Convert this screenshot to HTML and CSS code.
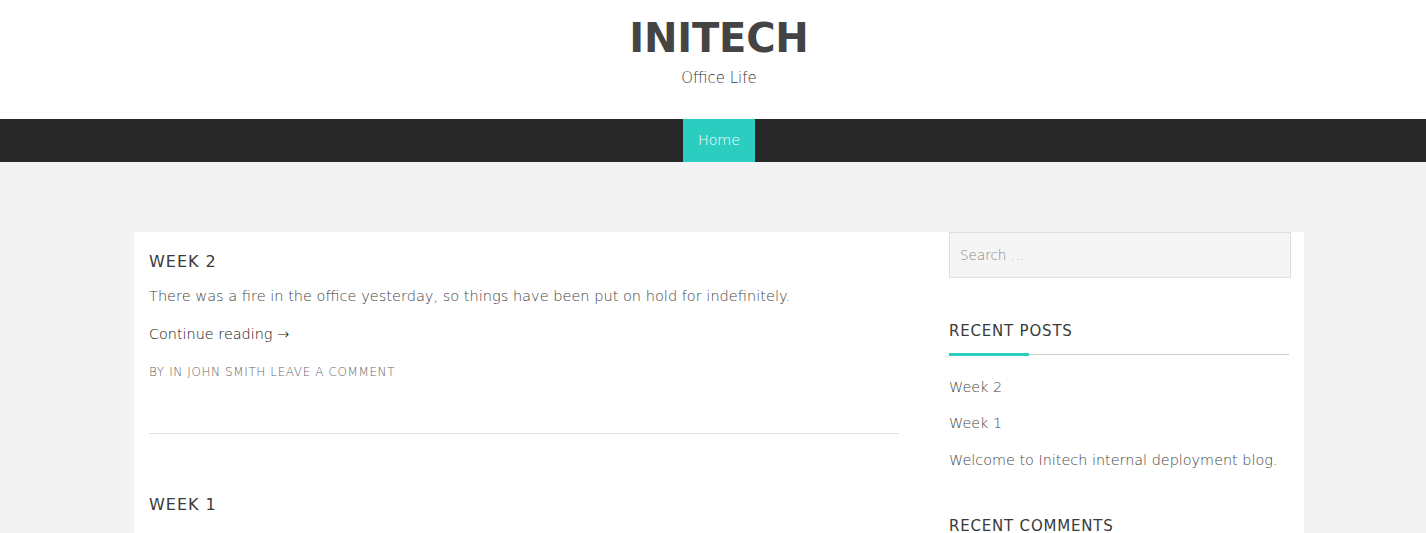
FILE: index.html
```html
<!DOCTYPE html>
<html>
<head>
<meta charset="utf-8">
<link rel="stylesheet" href="styles.css">
</head>
<body>
<div class="site">
<header class="site-header">
  <h1 class="site-title">INITECH</h1>
  <p class="site-desc">Office Life</p>
</header>
<nav class="main-nav">
  <a class="nav-item active" href="#">Home</a>
</nav>
<div class="page">
  <div class="container">
    <main class="content">
      <article class="post">
        <h2 class="post-title">Week 2</h2>
        <p class="post-excerpt">There was a fire in the office yesterday, so things have been put on hold for indefinitely.</p>
        <a class="more" href="#">Continue reading →</a>
        <div class="meta">By in John Smith Leave a comment</div>
      </article>
      <article class="post">
        <h2 class="post-title">Week 1</h2>
      </article>
    </main>
    <aside class="sidebar">
      <div class="search"><input class="search-field" type="text" placeholder="Search …"></div>
      <section class="widget">
        <h3 class="widget-title">Recent Posts</h3>
        <ul class="widget-list">
          <li><a href="#">Week 2</a></li>
          <li><a href="#">Week 1</a></li>
          <li><a href="#">Welcome to Initech internal deployment blog.</a></li>
        </ul>
      </section>
      <section class="widget">
        <h3 class="widget-title">Recent Comments</h3>
      </section>
    </aside>
  </div>
</div>
</div>
</body>
</html>
```
FILE: styles.css
```css
* { box-sizing: border-box; }
html, body { margin: 0; padding: 0; }
body {
  font-family: "DejaVu Sans", sans-serif;
  background: #f3f3f3;
  color: #666;
  overflow: hidden;
}
a { text-decoration: none; color: inherit; }
.site { width: 1438px; }

.site-header {
  background: #fff;
  height: 119px;
  text-align: center;
  padding-top: 14px;
}
.site-title {
  margin: 0;
  font-size: 40px;
  line-height: 48px;
  font-weight: bold;
  color: #444;
  letter-spacing: -0.2px;
}
.site-desc {
  margin: 5px 0 0;
  font-size: 15px;
  line-height: 22px;
  font-weight: 300;
  color: #333;
}

.main-nav {
  background: #282828;
  height: 43px;
  display: flex;
  justify-content: center;
}
.nav-item {
  background: #2bcdc1;
  color: #fff;
  font-size: 14.3px;
  font-weight: 300;
  padding: 0 15px;
  line-height: 43px;
}

.page {
  padding-top: 70px;
}
.container {
  width: 1170px;
  margin: 0 auto;
  background: #fff;
  display: flex;
  min-height: 400px;
}
.content {
  width: 780px;
  padding: 0 15px;
}
.post {
  padding-top: 20px;
}
.post + .post {
  padding-top: 61px;
}
.post:first-child {
  border-bottom: 1px solid #e0e0e0;
  padding-bottom: 53px;
}
.post-title {
  margin: 0;
  font-size: 16px;
  line-height: 20px;
  font-weight: normal;
  text-transform: uppercase;
  letter-spacing: 1px;
  color: #3a3a3a;
}
.post-excerpt {
  margin: 14px 0 0;
  font-size: 14.55px;
  line-height: 20px;
  font-weight: 300;
  color: #444;
}
.more {
  display: block;
  margin-top: 18px;
  font-size: 14.4px;
  line-height: 20px;
  font-weight: 300;
  color: #111;
}
.meta {
  margin-top: 20px;
  font-size: 12px;
  line-height: 16px;
  font-weight: 300;
  text-transform: uppercase;
  letter-spacing: 0.6px;
  color: #666;
}

.sidebar {
  width: 390px;
  padding: 0 15px 0 35px;
}
.search-field {
  width: 342px;
  height: 46px;
  background: #f5f5f5;
  border: 1px solid #ddd;
  padding: 0 10px;
  font-family: "DejaVu Sans", sans-serif;
  font-size: 13.5px;
  font-weight: 300;
  color: #666;
  outline: none;
  display: block;
}
.search-field::placeholder { color: #888; }
.widget {
  margin-top: 43px;
}
.widget + .widget { margin-top: 46px; }
.widget-title {
  margin: 0;
  font-size: 15px;
  line-height: 20px;
  font-weight: normal;
  text-transform: uppercase;
  letter-spacing: 0.8px;
  color: #3a3a3a;
  padding-bottom: 13px;
  border-bottom: 1px solid #ccc;
  position: relative;
}
.widget-title::after {
  content: "";
  position: absolute;
  left: 0;
  bottom: -2px;
  width: 80px;
  height: 3px;
  background: #2bcdc1;
}
.widget-list {
  list-style: none;
  margin: 0;
  padding: 0;
  margin-top: 22px;
}
.widget-list li {
  font-size: 14.4px;
  line-height: 20px;
  font-weight: 300;
  margin-bottom: 16.3px;
  color: #444;
}
```
